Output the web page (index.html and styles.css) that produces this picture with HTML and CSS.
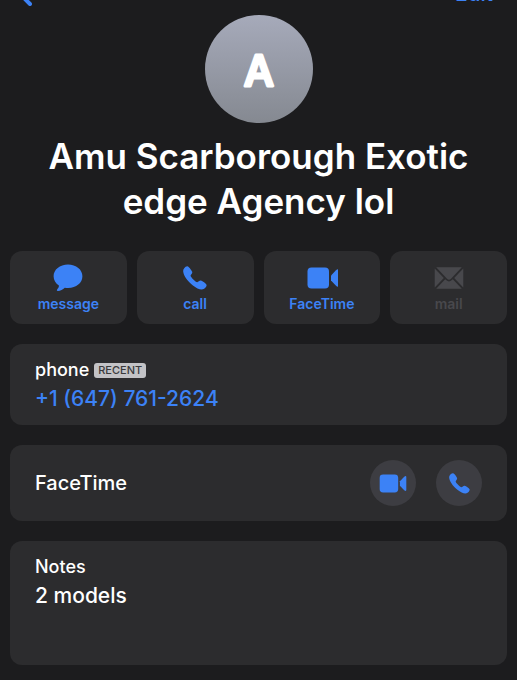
FILE: index.html
```html
<!DOCTYPE html>
<html lang="en">
<head>
<meta charset="utf-8">
<meta name="viewport" content="width=device-width, initial-scale=1">
<title>Contact</title>
<link rel="stylesheet" href="styles.css">
</head>
<body>
<svg class="symbols" aria-hidden="true">
  <symbol id="video" viewBox="0 0 32 22">
    <rect x="0.5" y="0.5" width="21.5" height="21" rx="4"/>
    <path d="M24 8.5 L29 3.2 Q31.5 1.2 31.5 4 V18 Q31.5 20.8 29 18.8 L24 13.5 Z"/>
  </symbol>
  <symbol id="phone" viewBox="0 0 24 24">
    <path d="M1.2 2.2 C2.2 1 3.6 0 4.8 .4 C6.4 1 8.6 4.4 9.2 5.8 C9.7 7.2 8 8.6 7.6 9.6 C7.4 10.8 12.8 16.2 14.2 16.2 C15.4 15.9 16.6 14.1 18 14.5 C19.6 15 22.8 17.2 23.5 18.7 C24 20.2 22.4 21.8 21.2 22.7 C18.6 24.4 14.4 23 9.6 19.2 C4.2 14.8 .5 9.2 .2 5.4 C.1 4 .4 3 1.2 2.2 Z"/>
  </symbol>
</svg>
<nav class="topbar">
  <a class="back" href="#" aria-label="Back">
    <svg width="14" height="24" viewBox="0 0 14 24" aria-hidden="true"><path d="M12 2 L2 12 L12 22"/></svg>
  </a>
  <a class="edit" href="#">Edit</a>
</nav>
<main class="contact">
  <header class="profile">
    <svg class="avatar" viewBox="0 0 108 108" role="img" aria-label="A">
      <defs><linearGradient id="shade" x1="0" y1="0" x2="0" y2="1"><stop offset="0" stop-color="#a6aaba"/><stop offset="1" stop-color="#858991"/></linearGradient></defs>
      <circle cx="54" cy="54" r="54" fill="url(#shade)"/>
      <text class="initial" x="54" y="71">A</text>
    </svg>
    <h1 class="name">Amu Scarborough Exotic edge Agency lol</h1>
  </header>
  <div class="actions">
    <button class="action" type="button">
      <svg width="30" height="28" viewBox="0 0 30 28" aria-hidden="true"><path d="M15 .5 C23.2 .5 29.4 5.6 29.4 12.3 C29.4 19 23.2 24 15.2 24 C13.9 24 12.8 23.9 11.8 23.7 C9.9 25.3 7.3 26.8 5 27 C3.8 27.1 3.5 26.2 4.3 25.3 C5.4 24.1 6 22.9 5.9 21.6 C2.6 19.5 .6 16.2 .6 12.3 C.6 5.6 6.8 .5 15 .5 Z"/></svg>
      <span>message</span>
    </button>
    <button class="action" type="button">
      <svg width="24" height="28" viewBox="0 -2 24 28" aria-hidden="true"><use href="#phone" width="24" height="24"/></svg>
      <span>call</span>
    </button>
    <button class="action" type="button">
      <svg width="32" height="28" viewBox="-1 -3 32 28" aria-hidden="true"><use href="#video" width="32" height="22"/></svg>
      <span>FaceTime</span>
    </button>
    <button class="action" type="button" disabled>
      <svg width="30" height="28" viewBox="0 -3 30 28" aria-hidden="true"><path d="M2.2 .3 H27.8 L17 11.8 Q15 13.6 13 11.8 Z M.7 1.4 L9.8 10.9 L.7 20.4 Z M29.3 1.4 V20.4 L20.2 10.9 Z M2.2 21.7 L11.2 12.3 Q15 16.6 18.8 12.3 L27.8 21.7 Z"/></svg>
      <span>mail</span>
    </button>
  </div>
  <section class="card">
    <div class="label">phone <span class="badge">RECENT</span></div>
    <a class="value number" href="tel:+16477612624">+1 (647) 761-2624</a>
  </section>
  <section class="card facetime">
    <h2 class="value">FaceTime</h2>
    <div class="calls">
      <button class="round" type="button" aria-label="FaceTime video"><svg width="28" height="19" viewBox="0 0 32 22" aria-hidden="true"><use href="#video" width="32" height="22"/></svg></button>
      <button class="round" type="button" aria-label="FaceTime audio"><svg width="21" height="21" viewBox="0 0 24 24" aria-hidden="true"><use href="#phone"/></svg></button>
    </div>
  </section>
  <section class="card notes">
    <h2 class="label">Notes</h2>
    <p class="value">2 models</p>
  </section>
</main>
</body>
</html>
```

FILE: styles.css
```css
* { box-sizing: border-box; }
body {
  margin: 0;
  background: #1c1c1e;
  color: #fff;
  font-family: Inter, "Liberation Sans", sans-serif;
}
h1, h2, p { margin: 0; }
a { text-decoration: none; }
button { border: 0; font-family: inherit; }
.symbols { position: absolute; width: 0; height: 0; }
.topbar {
  display: flex;
  justify-content: space-between;
  align-items: flex-end;
  height: 15px;
  padding: 0 24px 9px 18px;
  color: #3c82f6;
}
.back, .edit { color: inherit; }
.back svg { display: block; fill: none; stroke: currentColor; stroke-width: 4; stroke-linecap: round; stroke-linejoin: round; }
.edit { font-size: 21px; line-height: 24px; font-weight: 500; }
.contact { padding: 0 10px 15px; }
.profile { text-align: center; }
.avatar { display: block; width: 108px; margin: 0 auto; }
.initial {
  fill: #fff;
  stroke: #fff;
  stroke-width: 3px;
  stroke-linejoin: round;
  font-size: 42px;
  font-weight: 500;
  text-anchor: middle;
}
.name {
  padding: 11px 30px 0;
  font-size: 35px;
  line-height: 45px;
  font-weight: 600;
}
.actions {
  display: grid;
  grid-template-columns: repeat(4, 1fr);
  gap: 10px;
  margin-top: 27px;
}
.action {
  display: flex;
  flex-direction: column;
  align-items: center;
  gap: 2px;
  padding: 13px 0 10px;
  border-radius: 12px;
  background: #2c2c2e;
  color: #3c82f6;
  font-size: 14px;
  line-height: 20px;
  font-weight: 600;
}
.action:disabled { color: #48484c; }
.action svg, .round svg { display: block; fill: currentColor; }
.card {
  margin-top: 20px;
  padding: 13px 25px 11px;
  border-radius: 12px;
  background: #2c2c2e;
}
.label {
  display: flex;
  align-items: center;
  gap: 5px;
  font-size: 18px;
  line-height: 26px;
  font-weight: 500;
}
.badge {
  padding: 0 4px;
  border-radius: 3px;
  background: #c3c3c6;
  color: #3a3a3c;
  font-size: 11px;
  line-height: 15px;
  font-weight: 500;
}
.value {
  display: block;
  font-size: 21px;
  line-height: 31px;
  font-weight: 500;
}
.number { color: #3c82f6; }
.facetime { display: flex; justify-content: space-between; align-items: center; padding: 15px 25px; }
.facetime .value { font-size: 20px; }
.calls { display: flex; gap: 20px; }
.round {
  display: grid;
  place-items: center;
  width: 46px;
  height: 46px;
  padding: 0;
  border-radius: 50%;
  background: #3d3d42;
  color: #3c82f6;
}
.notes { min-height: 124px; }
```
